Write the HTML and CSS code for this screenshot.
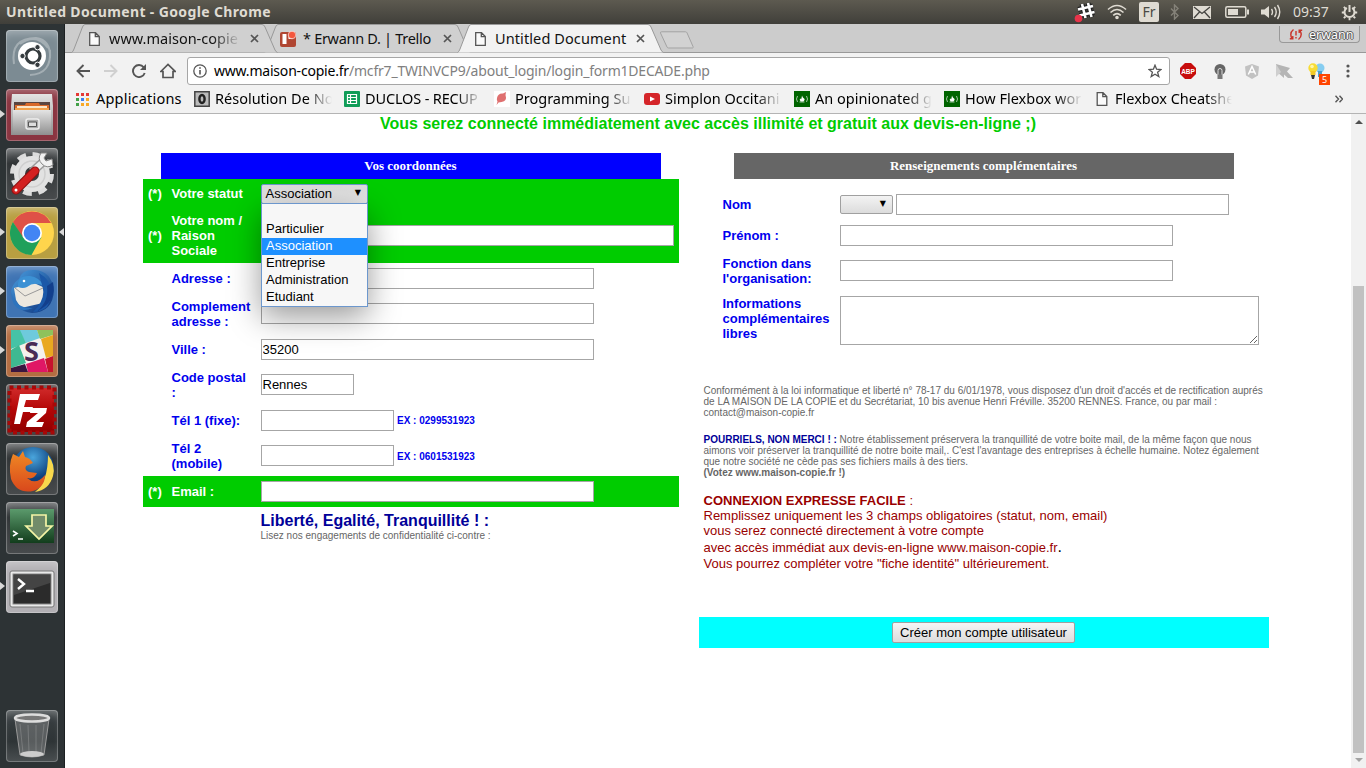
FILE: index.html
```html
<!DOCTYPE html>
<html lang="fr">
<head>
<meta charset="utf-8">
<title>Untitled Document</title>
<link rel="stylesheet" href="styles.css">
</head>
<body>
<svg class="defs" width="0" height="0">
  <defs>
    <linearGradient id="metal" x2="0" y2="1"><stop offset="0" stop-color="#e4e4e4"/><stop offset="1" stop-color="#8f8f8f"/></linearGradient>
    <linearGradient id="greenScreen" x2="0" y2="1"><stop offset="0" stop-color="#5b9a6c"/><stop offset="1" stop-color="#123d1c"/></linearGradient>
    <linearGradient id="fox" x2="0" y2="1"><stop offset="0" stop-color="#f08a24"/><stop offset="1" stop-color="#d9481c"/></linearGradient>
    <radialGradient id="globe" cx=".5" cy=".25"><stop offset="0" stop-color="#4aa5dc"/><stop offset="1" stop-color="#0d3f7d"/></radialGradient>
    <linearGradient id="bird" x2="1" y2="1"><stop offset="0" stop-color="#4a9ee0"/><stop offset="1" stop-color="#0b2f78"/></linearGradient>
    <linearGradient id="stamp" x2="0" y2="1"><stop offset="0" stop-color="#d02a2a"/><stop offset=".5" stop-color="#b30505"/><stop offset="1" stop-color="#8f0000"/></linearGradient>
    <symbol id="page" viewBox="0 0 11 14"><path d="M.7.7h5.8l3.8 3.8v8.8H.7zM6.3.7v4h4" fill="#fafafa" stroke="#555" stroke-width="1.3"/></symbol>
    <symbol id="close" viewBox="0 0 9 9"><path d="M1 1l7 7M8 1L1 8" stroke="#555" stroke-width="1.7"/></symbol>
    <symbol id="tabshape" viewBox="0 0 207 29"><path d="M.5 28.5Q2 28 3 25L11.500 3Q12.500.5 14 .5H191Q193 .5 194 3L204 26Q205 28 206.500 28.500"/></symbol>
    <symbol id="fcc" viewBox="0 0 16 16"><path fill="#006400" d="M0 0h16v16H0z"/><path d="M3.500 5Q1.500 8 3.500 11M12.500 5q2 3 0 6M5.500 11h5" stroke="#b5cfb5" stroke-width=".9" fill="none"/><path d="M8 4.500q.5 2 2 3t-.6 3H6.600Q5 8.700 6.300 7.300q.3 1 .9.900Q7.800 6 8 4.500z" fill="#fff"/></symbol>
  </defs>
</svg>

<header class="panel">
  <span class="panel-title">Untitled Document - Google Chrome</span>
  <div class="tray">
    <svg class="t-slack" width="22" height="22" viewBox="0 0 22 22"><g fill="none" stroke="#222" stroke-width="5"><path d="M8 3l3.500 14M14 2l3.500 14M4 8.500l15-3.500M5.500 14.500l15-3.500"/></g><g fill="none" stroke="#fff" stroke-width="2.600"><path d="M8 3l3.500 14M14 2l3.500 14M4 8.500l15-3.500M5.500 14.500l15-3.500"/></g><circle cx="4.500" cy="17.500" r="3.800" fill="#e8344a"/></svg>
    <svg class="t-wifi" width="20" height="16" viewBox="0 0 20 16" fill="none" stroke="#dfdbd2" stroke-width="1.600"><path d="M1 5.500q9-8 18 0M3.500 8.500q6.500-6 13 0M6.200 11.300q3.800-3.500 7.600 0"/><circle cx="10" cy="13.500" r="1" fill="#dfdbd2"/></svg>
    <span class="kbd">Fr</span>
    <svg class="t-bt" width="10" height="16" viewBox="0 0 10 16" fill="none" stroke="#858279" stroke-width="1.400"><path d="M1 4.500l7 7-3.500 3.500V1L8 4.500l-7 7"/></svg>
    <svg class="t-mail" width="18" height="13" viewBox="0 0 18 13"><path fill="#dfdbd2" d="M0 0h18v13H0z"/><path d="M1 1l8 6.500L17 1M1 12l5.500-6M17 12l-5.500-6" fill="none" stroke="#454440" stroke-width="1.300"/></svg>
    <svg class="t-bat" width="24" height="12" viewBox="0 0 24 12"><rect x=".8" y=".8" width="20" height="10.400" rx="1.500" fill="none" stroke="#dfdbd2" stroke-width="1.500"/><path fill="#dfdbd2" d="M3 3h10v6H3zM22 3.500h2v5h-2z"/></svg>
    <svg class="t-vol" width="20" height="16" viewBox="0 0 20 16"><path fill="#dfdbd2" d="M0 5.500h3.500L8 2v12L3.500 10.500H0z"/><path d="M10.500 5q2 3 0 6M13.500 3q3.500 5 0 10M16.500 1q4.500 7 0 14" fill="none" stroke="#dfdbd2" stroke-width="1.400"/></svg>
    <span class="clock">09:37</span>
    <svg class="t-gear" width="17" height="17" viewBox="0 0 17 17" fill="none" stroke="#dfdbd2"><path d="M5.800 3.900A5 5 0 1 0 11.200 3.900" stroke-width="2"/><path d="M8.500 1v7" stroke-width="2"/><path d="M.8 8.500h2.500M13.700 8.500h2.500M8.500 13.700v2.500M2.800 14.200l1.700-1.700M14.200 14.200l-1.700-1.700M2.800 2.800l1.700 1.700M14.200 2.800l-1.700 1.700" stroke-width="1.800"/></svg>
  </div>
</header>

<div class="desktop">
  <nav class="launcher">
    <div class="tile dash"><svg viewBox="0 0 52 52"><path d="M8 34Q4 8 30 8q15 2 14 20M44 20q2 24-20 25M14 14Q30 2 42 18" fill="none" stroke="#fff" stroke-opacity=".3" stroke-width="2"/><circle cx="26" cy="26" r="14" fill="#fff"/><circle cx="27" cy="26" r="7" fill="none" stroke="#353b3e" stroke-width="3.200"/><g fill="#353b3e" stroke="#fff"><circle cx="16.500" cy="26" r="2.700"/><circle cx="31.500" cy="17.200" r="2.700"/><circle cx="31.500" cy="34.800" r="2.700"/></g></svg></div>
    <div class="tile files running"><svg viewBox="0 0 52 52"><path d="M6 5h40l1 12v29H5V17z" fill="url(#metal)"/><path fill="#5a4540" d="M8 13h36v9H8z"/><path fill="#d8692a" d="M20 14h13l1 2h9v6H9v-6h10z"/><path fill="#fae5c8" d="M11 17h30v2H11z"/><path fill="#f2a14b" d="M9 19h34v3H9z"/><path fill="url(#metal)" d="M7 21h38v25H7z"/><rect x="20" y="30" width="13" height="10" rx="2" fill="#aaa" stroke="#eee" stroke-width="1.500"/><path fill="#ddd" stroke="#555" d="M22.500 33h8v4.500h-8z"/></svg></div>
    <div class="tile dark"><svg viewBox="0 0 52 52"><circle cx="26" cy="26" r="19" fill="none" stroke="#dcdcdc" stroke-width="6" stroke-dasharray="8.500 6.420"/><circle cx="26" cy="26" r="12.500" fill="none" stroke="#e2e2e2" stroke-width="11"/><circle cx="26" cy="26" r="13" fill="none" stroke="#cfcfcf" stroke-width="1.500"/><path d="M26 24L38 13" stroke="#999" stroke-width="9"/><path d="M26 24L38 13" stroke="#ececec" stroke-width="6"/><path d="M35 5q-4 6 1 11t11 1l-1-6-6 2-2-3 3-5z" fill="#f1f1f1" stroke="#888"/><path d="M10 42L29 23" stroke="#8d1010" stroke-width="9" stroke-linecap="round"/><path d="M10 42L29 23" stroke="#d32020" stroke-width="7" stroke-linecap="round"/><circle cx="10" cy="42" r="1.500" fill="#fff"/></svg></div>
    <div class="tile chrome running focused"><svg viewBox="0 0 52 52"><circle cx="26" cy="26" r="22" fill="#ffd54c"/><path d="M6.900 15A22 22 0 0 1 45.100 16H26L16.500 31z" fill="#df5147"/><path d="M6.900 15A22 22 0 0 0 25.500 48L35.500 30 26 35l-9-5z" fill="#20a05b"/><circle cx="26" cy="26" r="10" fill="#fff"/><circle cx="26" cy="26" r="8.300" fill="#4285f4"/></svg></div>
    <div class="tile bird running"><svg viewBox="0 0 52 52"><path d="M13 13Q16 3 29 4q16 1 19 20-1 22-22 23Q8 45 5 26q1-8 8-13z" fill="url(#bird)"/><path d="M8 22l20-5 11 5-2 15-22 5-5-8z" fill="#ece8df"/><path d="M9 22l10 8 18-8" fill="none" stroke="#999"/><path d="M12 21q-1-12 12-11 9 1 14 10-10-5-17 1-4 2-9 0z" fill="#3c91d4"/><path d="M33 7q20 12 8 34-6 5-14 5 14-14 9-27z" fill="#1b58a8"/><path d="M47 16q4 20-16 29 12-9 10-25z" fill="#123f8c"/><path d="M5 25q4 18 22 17-17 7-21-9z" fill="#2d74be"/><circle cx="18" cy="15" r="1.300" fill="#fff"/></svg></div>
    <div class="tile slack running"><svg viewBox="0 0 52 52"><path fill="#f4f1ee" d="M5 5h42v42H5z"/><path fill="#6ecadc" d="M13 5h18l3 8-14 5z"/><path fill="#8ec25b" d="M31 5h16v5L34 14z"/><path fill="#46c3a6" d="M5 5h9l6 13-15 6z"/><path fill="#3eb991" d="M5 25l8-5 7 18-15 5z"/><path fill="#e9a820" d="M35 14l12-4v21l-7 2z"/><path fill="#e01765" d="M20 39l18-6 4 14H22z"/><path fill="#c7122d" d="M39 34l8-3v16h-5z"/><path fill="#3b1640" d="M5 43l14-4 3 8H5z"/></svg><b class="slack-s">S</b></div>
    <div class="tile filezilla"><svg viewBox="0 0 52 52"><rect x="4" y="4" width="44" height="44" fill="url(#stamp)"/><rect x="3.500" y="3.500" width="45" height="45" fill="none" stroke="#a80808" stroke-width="4" stroke-dasharray="4 3.500"/><path d="M14 10h20l-2 6H20l-2 7h9l-2 5h-8l-3 12H8zM25 24h16l-1 5-10 9h8l-2 5H20l1-5 11-9h-8z" fill="#fff"/></svg></div>
    <div class="tile dark"><svg viewBox="0 0 52 52"><circle cx="27" cy="25" r="21" fill="url(#globe)"/><path d="M42 12q8 10 5 21-4 14-18 16 13-10 13-37z" fill="#f8d84c"/><path d="M7 11l6 3 4-6 2 6q5 1 8 6l-7 3q-2 4 3 6l8 1q-3 7-10 5 9 8 18-3 0 12-12 16Q11 51 5 36 2 22 7 11z" fill="url(#fox)"/></svg></div>
    <div class="tile dark"><svg viewBox="0 0 52 52"><rect x="4" y="7" width="44" height="34" fill="url(#greenScreen)"/><path d="M7 29l4 2.500L7 34M12 37h5" fill="none" stroke="#fff" stroke-width="1.600"/><path d="M26 13h14v11h6L33 37 20 24h6z" fill="#728c6a" stroke="#f5f5a6" stroke-width="1.700"/></svg></div>
    <div class="tile terminal running"><svg viewBox="0 0 52 52"><rect x="4" y="10" width="44" height="36" rx="2" fill="#e9e9e9" stroke="#777"/><rect x="7" y="13" width="38" height="30" fill="#2b2b2b" stroke="#888"/><path d="M8 14h36v8L8 34z" fill="#fff" opacity=".12"/><path d="M12 18l6 5-6 5M20 30h8" fill="none" stroke="#fff" stroke-width="2.400"/></svg></div>
    <div class="tile trash"><svg viewBox="0 0 52 52"><path d="M9 9h34l-5 36q-12 4-24 0z" fill="#aaa" fill-opacity=".35" stroke="#999"/><path d="M14 14l3 29M22 15l1 27M30 15v27M38 14l-3 29" stroke="#bbb" stroke-opacity=".3"/><ellipse cx="26" cy="44" rx="12" ry="3" fill="#ccc"/><ellipse cx="26" cy="8" rx="17" ry="3.500" fill="#777" stroke="#ddd" stroke-width="2.500"/></svg></div>
  </nav>

  <main class="browser">
    <div class="tabstrip">
      <div class="tab tab-1"><svg class="shape"><use href="#tabshape"/></svg><svg class="fav" width="11" height="14"><use href="#page"/></svg><span class="label fade">www.maison-copie</span><svg class="x" width="9" height="9"><use href="#close"/></svg></div>
      <div class="tab tab-2"><svg class="shape"><use href="#tabshape"/></svg><svg class="fav trello" width="16" height="16" viewBox="0 0 16 16"><rect y="1" width="16" height="15" rx="2" fill="#b04632"/><path fill="#fff" d="M2.500 3h4v10h-4zM8.500 3h4v5h-4z"/><circle cx="12" cy="4" r="3.800" fill="#f4573e" stroke="#fff" stroke-width=".6"/></svg><span class="label">* Erwann D. | Trello</span><svg class="x" width="9" height="9"><use href="#close"/></svg></div>
      <div class="tab tab-3"><svg class="shape"><use href="#tabshape"/></svg><svg class="fav" width="11" height="14"><use href="#page"/></svg><span class="label">Untitled Document</span><svg class="x" width="9" height="9"><use href="#close"/></svg></div>
      <svg class="newtab" width="36" height="18" viewBox="0 0 36 18"><path d="M2.500.8h24q1 0 1.500 1L34 15.500q.5 1.500-.5 1.500h-24q-1 0-1.500-1L1.500 2Q1.200.8 2.500.8z" fill="#d2d2d2" stroke="#a3a3a3"/></svg>
      <div class="profile"><svg width="14" height="13" viewBox="0 0 14 13" fill="none" stroke="#c9342b" stroke-width="1.400"><path d="M4.500 1.500Q0 5 3 10.500M.8 10.800h3V8M9.500 11.500q4.500-3.500 1.500-9M13.200 2.200h-3V5"/><path d="M7 3v4.500M7 9v1.500"/></svg><span>erwann</span></div>
    </div>

    <div class="toolbar">
      <div class="navicons">
        <svg width="14" height="14" viewBox="0 0 14 14" fill="none" stroke="#555" stroke-width="1.900"><path d="M14 7H1.500M7.500 1L1.500 7l6 6"/></svg>
        <svg width="14" height="14" viewBox="0 0 14 14" fill="none" stroke="#d0d0d0" stroke-width="1.900"><path d="M0 7h12.500M6.500 1l6 6-6 6"/></svg>
        <svg width="14" height="14" viewBox="0 0 14 14"><path d="M11.700 3.300A6 6 0 1 0 12.700 9" fill="none" stroke="#555" stroke-width="1.900"/><path d="M14 0v6H8z" fill="#555"/></svg>
        <svg width="16" height="16" viewBox="0 0 16 16" fill="none" stroke="#555" stroke-width="1.700"><path d="M.8 8.500L8 1.500l7.200 7H13v6H3v-6z"/></svg>
      </div>
      <div class="omnibox">
        <svg width="14" height="14" viewBox="0 0 14 14" fill="none" stroke="#555"><circle cx="7" cy="7" r="6.200" stroke-width="1.300"/><path d="M7 6v4.500M7 3.200v1.500" stroke-width="1.600"/></svg>
        <span class="url"><span class="host">www.maison-copie.fr</span>/mcfr7_TWINVCP9/about_login/login_form1DECADE.php</span>
        <svg width="14" height="14" viewBox="0 0 14 14" fill="none" stroke="#555" stroke-width="1.300"><path d="M7 1.200l1.600 4 4.400.3-3.400 2.700 1.200 4.300L7 10.200l-3.800 2.300 1.200-4.300L1 5.500l4.400-.3z"/></svg>
      </div>
      <div class="exts">
        <div><svg width="16" height="16" viewBox="0 0 16 16"><path d="M5 0h6l5 5v6l-5 5H5l-5-5V5z" fill="#c70d0d"/><text x="8" y="10.700" text-anchor="middle" class="abp">ABP</text></svg></div>
        <div><svg width="12" height="15" viewBox="0 0 12 15"><circle cx="6" cy="5.500" r="5.500" fill="#666"/><path d="M4 11V6.500a2 2 0 0 1 4 0V11" fill="none" stroke="#ddd" stroke-width="1"/><path fill="#777" d="M3.500 10.500h5V15h-5z"/></svg></div>
        <div><svg width="14" height="15" viewBox="0 0 14 15"><path d="M7 0l7 2.500-1 9L7 15l-6-3.500-1-9z" fill="#c2c2c2"/><path d="M3.300 10.500L7 2.500l3.700 8M4.800 8h4.400" fill="none" stroke="#fff" stroke-width="1.500"/></svg></div>
        <div><svg width="17" height="17" viewBox="0 0 17 17"><path d="M0 1l14 4-3 3.500 6 6.500h-5L8 11.500V15L0 8z" fill="#b5b5b5"/><path d="M0 1v13l5-5z" fill="#cfcfcf"/></svg></div>
        <div class="bulbs"><svg width="17" height="17" viewBox="0 0 17 17"><circle cx="12" cy="5" r="4.500" fill="#86cdf1"/><path fill="#4d9fca" d="M10 8h4v6h-4z"/><circle cx="5" cy="5" r="4.700" fill="#f7dc35"/><circle cx="4" cy="3.500" r="1.800" fill="#fff6a8"/><path fill="#f3c925" d="M2.500 8h5v4h-5z"/><path fill="#333" d="M3 12h4l-1 4H4z"/></svg><span>5</span></div>
        <div><svg width="4" height="14" viewBox="0 0 4 14" fill="#555"><circle cx="2" cy="2" r="1.600"/><circle cx="2" cy="7" r="1.600"/><circle cx="2" cy="12" r="1.600"/></svg></div>
      </div>
    </div>

    <div class="bookmarks">
      <div class="apps"><svg width="13" height="13" viewBox="0 0 13 13"><path fill="#e53935" d="M0 0h3v3H0zM5 0h3v3H5zM10 0h3v3h-3z"/><path fill="#43a047" d="M0 5h3v3H0z"/><path fill="#3d7ef0" d="M5 5h3v3H5z"/><path fill="#f9a825" d="M10 5h3v3h-3zM5 10h3v3H5zM10 10h3v3h-3z"/><path fill="#43a047" d="M0 10h3v3H0z"/></svg><span>Applications</span></div>
      <div class="bm"><svg width="16" height="16" viewBox="0 0 16 16"><path fill="#bbb" stroke="#444" stroke-width="1.500" d="M.8.800h14.400v14.400H.8z"/><ellipse cx="8" cy="8" rx="2.600" ry="4" fill="none" stroke="#222" stroke-width="2.400"/></svg><span class="fade">Résolution De No</span></div>
      <div class="bm"><svg width="16" height="16" viewBox="0 0 16 16"><rect width="16" height="16" rx="1" fill="#109d58"/><path d="M3.500 3.500h9v9h-9zM3.500 6.500h9M3.500 9.500h9M6.500 3.500v9" fill="none" stroke="#fff" stroke-width="1.200"/></svg><span class="fade duclos">DUCLOS - RECUP</span></div>
      <div class="bm"><svg width="16" height="16" viewBox="0 0 16 16"><path fill="#fff" d="M0 0h16v16H0z"/><path d="M3 7q1-5 6-4.500l3-1.500-.5 3q2 6-4 7l-3 .5L2.500 14l1-3.500Q2.500 9 3 7z" fill="#df7070"/></svg><span class="fade">Programming Su</span></div>
      <div class="bm"><svg width="16" height="16" viewBox="0 0 16 16"><rect y="2" width="16" height="12" rx="3" fill="#d52529"/><path fill="#fff" d="M6 5.500l5 2.500-5 2.500z"/></svg><span class="fade">Simplon Occitani</span></div>
      <div class="bm"><svg width="16" height="16"><use href="#fcc"/></svg><span class="fade">An opinionated g</span></div>
      <div class="bm"><svg width="16" height="16"><use href="#fcc"/></svg><span class="fade">How Flexbox wor</span></div>
      <div class="bm"><svg width="16" height="14"><use href="#page"/></svg><span class="fade">Flexbox Cheatshe</span></div>
      <svg class="more" width="8" height="8" viewBox="0 0 8 8" fill="none" stroke="#555" stroke-width="1.400"><path d="M.5.800L3.500 4l-3 3.200M4.500.800L7.500 4l-3 3.200"/></svg>
    </div>

    <div class="viewport">
      <div class="page">
        <h1>Vous serez connecté immédiatement avec accès illimité et gratuit aux devis-en-ligne ;)</h1>
        <div class="columns">
          <section class="left">
            <h2 class="blue">Vos coordonnées</h2>
            <div class="row req r-statut"><span>(*)</span><label>Votre statut</label>
              <div class="select open"><span>Association</span><i>▼</i>
                <ul class="menu"><li></li><li>Particulier</li><li class="sel">Association</li><li>Entreprise</li><li>Administration</li><li>Etudiant</li></ul>
              </div></div>
            <div class="row req h55"><span>(*)</span><label>Votre nom / Raison Sociale</label><div><input class="w413"></div></div>
            <div class="row"><span></span><label>Adresse :</label><div><input></div></div>
            <div class="row h40"><span></span><label>Complement adresse :</label><div><input></div></div>
            <div class="row"><span></span><label>Ville :</label><div><input value="35200"></div></div>
            <div class="row h40"><span></span><label>Code postal :</label><div><input class="w93" value="Rennes"></div></div>
            <div class="row"><span></span><label>Tél 1 (fixe):</label><div><input class="w133"><b>EX : 0299531923</b></div></div>
            <div class="row h40"><span></span><label>Tél 2 (mobile)</label><div><input class="w133"><b>EX : 0601531923</b></div></div>
            <div class="row req"><span>(*)</span><label>Email :</label><div><input></div></div>
            <div class="motto"><strong>Liberté, Egalité, Tranquillité ! :</strong><small>Lisez nos engagements de confidentialité ci-contre :</small></div>
          </section>
          <section class="right">
            <h2 class="gray">Renseignements complémentaires</h2>
            <div class="extra">
              <div class="xrow"><label>Nom</label><div><div class="select small"><i>▼</i></div><input></div></div>
              <div class="xrow"><label>Prénom :</label><div><input></div></div>
              <div class="xrow h40"><label>Fonction dans l'organisation:</label><div><input></div></div>
              <div class="xrow last"><label>Informations complémentaires libres</label><div><textarea></textarea></div></div>
            </div>
            <div class="legal">
              <p>Conformément à la loi informatique et liberté n° 78-17 du 6/01/1978, vous disposez d'un droit d'accés et de rectification auprés<br>de LA MAISON DE LA COPIE et du Secrétariat, 10 bis avenue Henri Fréville. 35200 RENNES. France, ou par mail :<br>contact@maison-copie.fr</p>
              <p><strong class="navy">POURRIELS, NON MERCI ! :</strong> Notre établissement préservera la tranquillité de votre boite mail, de la même façon que nous<br>aimons voir préserver la tranquillité de notre boite mail,. C'est l'avantage des entreprises à échelle humaine. Notez également<br>que notre société ne cède pas ses fichiers mails à des tiers.<br><strong>(Votez www.maison-copie.fr !)</strong></p>
              <p class="express"><strong>CONNEXION EXPRESSE FACILE</strong> :<br>Remplissez uniquement les 3 champs obligatoires (statut, nom, email)<br>vous serez connecté directement à votre compte<br><span class="tall">avec accès immédiat aux devis-en-ligne www.maison-copie.fr<span class="dot">.</span></span>Vous pourrez compléter votre "fiche identité" ultérieurement.</p>
            </div>
            <div class="submit"><button>Créer mon compte utilisateur</button></div>
          </section>
        </div>
      </div>
      <div class="scrollbar"><i class="up"></i><i class="thumb"></i><i class="down"></i></div>
    </div>
  </main>
</div>
</body>
</html>
```
FILE: styles.css
```css
* { box-sizing: border-box; }
body { margin: 0; width: 1366px; height: 768px; overflow: hidden; background: #fff; font-family: "Liberation Sans", Arial, sans-serif; }
svg { display: block; flex: none; }
.defs { position: absolute; }

/* Top panel */
.panel { height: 24px; display: flex; align-items: center; justify-content: space-between; padding: 0 8px 0 6px; background: linear-gradient(#5d5a50, #403f3a); color: #dfdbd2; font-family: "Noto Sans", sans-serif; }
.panel-title { font-weight: 700; font-size: 14px; line-height: 24px; letter-spacing: .37px; white-space: nowrap; }
.tray { display: flex; align-items: center; }
.t-wifi { margin-left: 11px; }
.kbd { margin-left: 12px; width: 20px; height: 20px; border-radius: 2px; background: #dfdbd2; color: #4a4944; font-size: 14px; line-height: 20px; text-align: center; }
.t-bt { margin-left: 11px; }
.t-mail { margin-left: 13px; }
.t-bat { margin-left: 14px; }
.t-vol { margin-left: 12px; }
.clock { width: 37px; margin-left: 12px; font-size: 14px; line-height: 24px; }
.t-gear { margin-left: 11px; }

/* Launcher */
.desktop { display: flex; height: 744px; }
.launcher { width: 65px; flex: none; display: flex; flex-direction: column; gap: 7px; padding: 6px; background: #2d3335; border-right: 1px solid #1c2022; }
.tile { position: relative; width: 52px; height: 52px; flex: none; border-radius: 4px; box-shadow: inset 0 0 0 1px rgba(255,255,255,.25), inset 0 8px 10px -5px rgba(255,255,255,.35); }
.tile svg { width: 52px; height: 52px; }
.dash { background: #7c8b93; }
.files { background: #8a3440; }
.dark { background: linear-gradient(#5a5d5f 0, #303436 30%, #484b4d); }
.chrome { background: #b89f41; }
.bird { background: #3f74b4; }
.slack { background: #b46d42; }
.slack-s { position: absolute; left: 18px; top: 9px; color: #4a2b55; font: 700 27px/34px "Noto Sans", sans-serif; }
.filezilla { background: #4d4242; }
.terminal { background: #b2b0b4; }
.trash { margin-top: auto; background: linear-gradient(#3b4144, #2e3436 60%, #4a4f51); }
.running::before { content: ""; position: absolute; left: -6px; top: 21px; border-left: 5px solid #d8d8d8; border-top: 4px solid transparent; border-bottom: 4px solid transparent; }
.focused::after { content: ""; position: absolute; right: -6px; top: 21px; border-right: 5px solid #d8d8d8; border-top: 4px solid transparent; border-bottom: 4px solid transparent; }

/* Browser chrome */
.browser { flex: 1; min-width: 0; display: flex; flex-direction: column; }
.tabstrip { height: 29px; flex: none; display: flex; background: linear-gradient(#ccc, #ccc 28px, #999 28px); padding-left: 6px; font: 14.500px/28px "Noto Sans", sans-serif; }
.tab { position: relative; width: 206px; height: 29px; display: flex; align-items: center; margin-right: -13px; padding: 0 18px 0 18px; }
.tab .shape { position: absolute; left: 0; top: 0; width: 207px; height: 29px; fill: #d0d0d0; stroke: #999; }
.tab-1 { z-index: 2; }
.tab-2 { z-index: 1; padding-left: 16px; }
.tab-3 { z-index: 3; }
.tab-3 .shape { fill: #f2f2f2; }
.fav, .tab .label, .x { position: relative; }
.tab .label { width: 132px; height: 30px; margin-left: 9px; flex: none; white-space: nowrap; color: #111; }
.tab .trello + .label { margin-left: 7px; letter-spacing: -.3px; }
.tab-3 .label { letter-spacing: .1px; }
.x { margin-left: auto; }
.fade { -webkit-mask-image: linear-gradient(90deg, #000 78%, transparent); mask-image: linear-gradient(90deg, #000 78%, transparent); }
.newtab { margin: 7px 0 0 9px; }
.profile { margin: 2px 6px 0 auto; width: 81px; height: 17px; display: flex; align-items: center; gap: 6px; padding-left: 9px; border: 1px solid #999; border-top: 0; border-radius: 0 0 4px 4px; background: #d0d0d0; font-size: 12.500px; line-height: 16px; color: #fff; text-shadow: 1px 0 #555, -1px 0 #555, 0 1px #555, 0 -1px #555; }
.profile span { padding-top: 2px; }
.toolbar { height: 32px; flex: none; display: flex; align-items: center; padding: 4px 2px 0 11px; background: #f2f2f2; }
.navicons { display: flex; align-items: center; gap: 14px; width: 111px; flex: none; }
.omnibox { width: 983px; flex: none; height: 28px; display: flex; align-items: center; padding: 0 7px 0 5px; border: 1px solid #a6a6a6; border-radius: 3px; background: #fff; }
.url { flex: 1; margin-left: 7px; color: #808080; font: 14px/26px "Noto Sans", sans-serif; letter-spacing: -.2px; white-space: nowrap; }
.host { color: #000; }
.exts { display: flex; align-items: center; padding-left: 2px; }
.exts div { width: 32px; display: flex; justify-content: center; }
.abp { font: 700 6.500px "Liberation Sans", sans-serif; fill: #fff; }
.bulbs { position: relative; }
.bulbs span { position: absolute; left: 19px; top: 11px; width: 11px; height: 11px; background: #ff4500; color: #fff; font: 9px/11px "Noto Sans", sans-serif; text-align: center; }
.bookmarks { height: 29px; flex: none; display: flex; align-items: center; gap: 12px; padding: 0 23px 0 11px; background: #f2f2f2; border-bottom: 1px solid #b4b4b4; font: 14.500px/24px "Noto Sans", sans-serif; white-space: nowrap; color: #000; }
.apps { width: 106px; display: flex; align-items: center; gap: 7px; letter-spacing: .2px; }
.bm { width: 138px; flex: none; display: flex; align-items: center; gap: 5px; }
.bm span { width: 117px; }
.bookmarks span { padding-bottom: 2px; }
.bm .duclos { letter-spacing: -.15px; }
.more { margin-left: auto; }

/* Web page */
.viewport { flex: 1; display: flex; min-height: 0; }
.page { flex: 1; overflow: hidden; }
h1 { margin: 0; height: 39px; font-size: 16px; line-height: 19px; text-align: center; color: #0c0; }
.columns { display: flex; gap: 20px; padding-left: 78px; }
h2 { width: 500px; height: 26px; margin: 0; padding-right: 1px; color: #fff; text-align: center; font: 700 13px/26px "Liberation Serif", "Times New Roman", serif; }
.left { width: 536px; }
.blue { margin-left: 18px; background: #00f; }
.row { display: grid; grid-template-columns: 23.500px 89.500px 1fr; align-items: center; height: 31px; font-size: 13px; line-height: 15px; font-weight: 700; color: #00e; }
.row > * { padding-left: 5px; }
.row label { padding-right: 5px; }
.row > .select { margin-left: 5px; padding-left: 3.500px; }
.req { background: #0c0; color: #fff; }
.row.r-statut { height: 29px; }
.row.h55 { height: 55px; }
.h40.h40 { height: 40px; }
.row > div:not(.select), .xrow > div { display: flex; align-items: center; gap: 3px; }
.h40.h40 > div { margin-top: -1px; }
.row b { font-size: 10px; line-height: 12px; padding-top: 1px; }
.h40 b { padding-top: 2px; }
input { display: block; width: 333px; height: 21px; margin: 0; padding: 1px .5px; border: 1px solid #a6a6a6; background: #fff; font: 13px "Liberation Sans", Arial, sans-serif; color: #000; }
input.w413 { width: 413px; }
input.w93 { width: 93px; }
input.w133 { width: 133px; }
.select { position: relative; display: flex; align-items: center; justify-content: space-between; padding: 0 6px 0 4px; border: 1px solid #a0a0a0; border-radius: 2px; background: linear-gradient(#f3f3f3, #dcdcdc); color: #000; font-weight: 400; font-size: 13px; }
.select i { font: 8px/12px "DejaVu Sans", sans-serif; padding-bottom: 2px; }
.select.open { width: 107px; height: 20px; border-color: #6c97cd; background: linear-gradient(#dcdcdc, #e8e8e8); }
.select.small { width: 53px; height: 19px; justify-content: flex-end; }
.menu { position: absolute; z-index: 5; left: -1px; top: 18px; width: 107px; height: 104px; margin: 0; padding: 0; list-style: none; background: #f7f7f7; border: 1px solid #6c97cd; box-shadow: 0 10px 30px rgba(0,0,0,.4); }
.menu li { height: 17px; padding-left: 4px; line-height: 16px; }
.menu .sel { background: #1e90ff; color: #fff; }
.motto { padding: 4px 0 0 117.500px; }
.motto strong { display: block; font-size: 16px; line-height: 19px; color: #009; }
.motto small { display: block; font-size: 10px; line-height: 11px; color: #666; }
.right { width: 570px; }
.gray { margin-left: 35px; background: #666; }
.extra { padding: 10px 0 0 23.500px; height: 206px; }
.xrow { display: grid; grid-template-columns: 117.500px 1fr; align-items: center; height: 31px; font-size: 13px; line-height: 15px; font-weight: 700; color: #00e; }
.xrow label { padding-right: 6px; }
.xrow.last { height: 60px; align-items: start; padding-top: 5px; }
textarea { display: block; width: 419px; height: 49px; margin: 0; border: 1px solid #a6a6a6; resize: both; }
.legal { padding-left: 4.500px; height: 232px; color: #666; font-size: 10px; line-height: 11px; white-space: nowrap; }
.legal p { margin: 0 0 16px; }
.navy { color: #009; }
.legal p:nth-child(2) { margin-bottom: 15px; }
.legal .express { font-size: 13px; line-height: 15px; color: #900; }
.tall { display: block; height: 18px; line-height: 18px; }
.dot { font-size: 16px; color: #000; }
.submit { display: flex; align-items: center; justify-content: center; height: 31px; padding-right: 1px; background: #0ff; }
button { width: 183px; height: 21px; margin: 0; padding: 0; border: 1px solid #a0a0a0; border-radius: 2px; background: linear-gradient(#f5f5f5, #dcdcdc); font: 13px "Liberation Sans", Arial, sans-serif; color: #000; }
.scrollbar { width: 15px; flex: none; display: flex; flex-direction: column; align-items: center; background: #f1f1f1; padding: 6px 0; }
.up { border: 4px solid transparent; border-top: 0; border-bottom: 4px solid #505050; }
.down { margin-top: auto; border: 4px solid transparent; border-bottom: 0; border-top: 4px solid #a3a3a3; }
.thumb { width: 11px; height: 467px; margin-top: 162px; background: #c1c1c1; }
```
